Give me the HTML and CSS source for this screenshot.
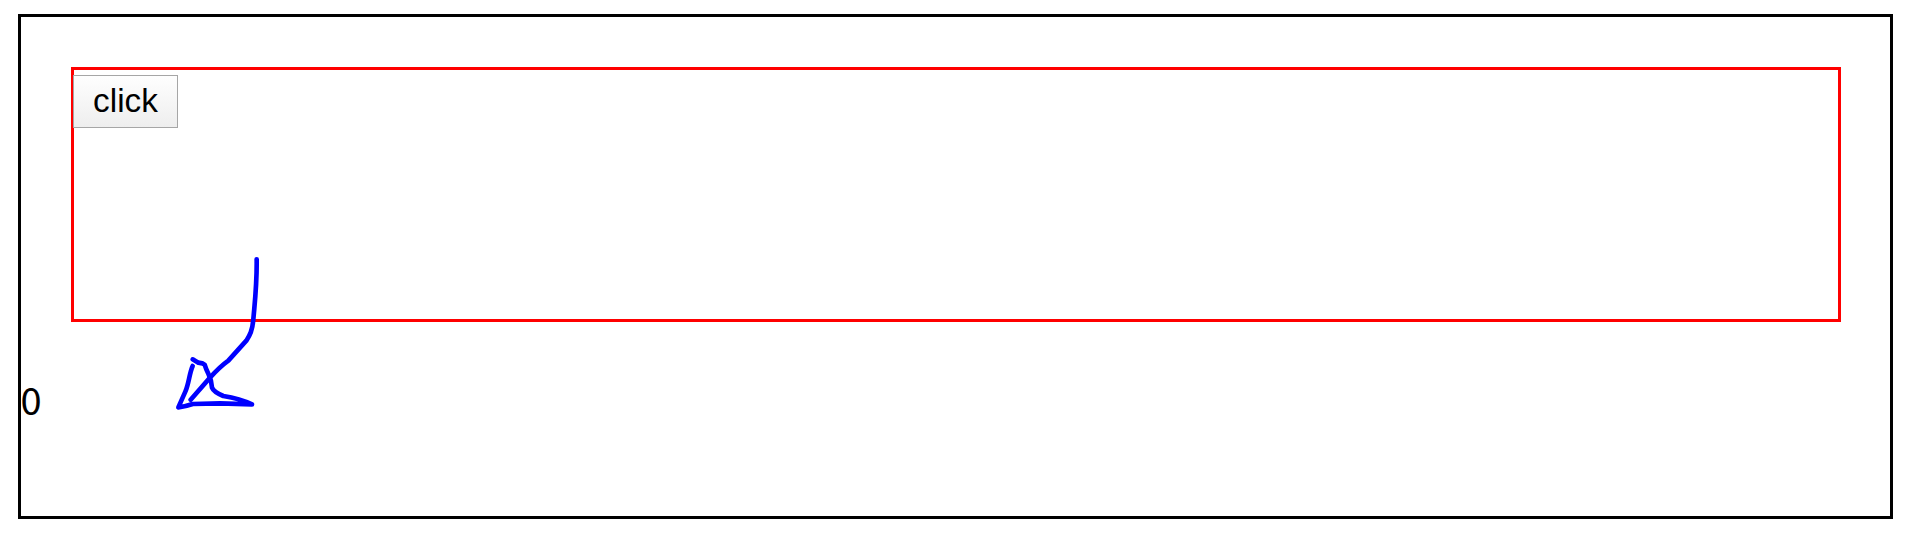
FILE: index.html
```html
<!DOCTYPE html>
<html lang="en">
<head>
<meta charset="utf-8">
<title>Click counter</title>
<link rel="stylesheet" href="styles.css">
</head>
<body>
<main class="outer">
  <section class="inner"><button class="btn" type="button">click</button></section>
  <div class="count">0</div>
</main>
<svg class="arrow" width="120" height="180" viewBox="0 0 360 540" aria-hidden="true">
  <path d="M290 58 C291 130 286 170 280 238 C277 272 270 285 259 302 L205 362 Q180 380 150 413 L92 479"/>
  <path d="M98 378 C88 400 87 430 76 455 L55 502 Q75 500 98 492 L180 490 L276 493 Q240 476 190 468 C170 460 160 453 156 443 C155 410 143 405 134 374 L127 370 L115 368 L98 358"/>
</svg>
</body>
</html>
```
FILE: styles.css
```css
body {
  margin: 0;
  padding: 14px 13px 17px 18px;
  background: #fff;
  color: #000;
  font-family: "Liberation Sans", Arial, sans-serif;
}

.outer {
  box-sizing: border-box;
  height: 505px;
  padding-top: 50px;
  border: 3px solid #000;
}

.inner {
  box-sizing: border-box;
  height: 255px;
  margin: 0 49px 50px 50px;
  padding-top: 5px;
  border: 3px solid #f00;
}

.btn {
  display: block;
  box-sizing: border-box;
  width: 105px;
  height: 53px;
  margin: 0 0 0 -1px;
  padding: 0 0 2px;
  border: 1px solid #a6a6a6;
  border-radius: 0;
  background: linear-gradient(#fefefe, #eee);
  color: #000;
  font: 400 33.333px/49px "Liberation Sans", Arial, sans-serif;
}

.count {
  margin-left: -0.5px;
  font-family: "Noto Sans CJK KR", sans-serif;
  font-size: 38px;
  line-height: 54px;
}

.arrow {
  position: absolute;
  left: 160px;
  top: 240px;
  fill: none;
  stroke: #00f;
  stroke-width: 14;
  stroke-linecap: round;
  stroke-linejoin: round;
}
```
